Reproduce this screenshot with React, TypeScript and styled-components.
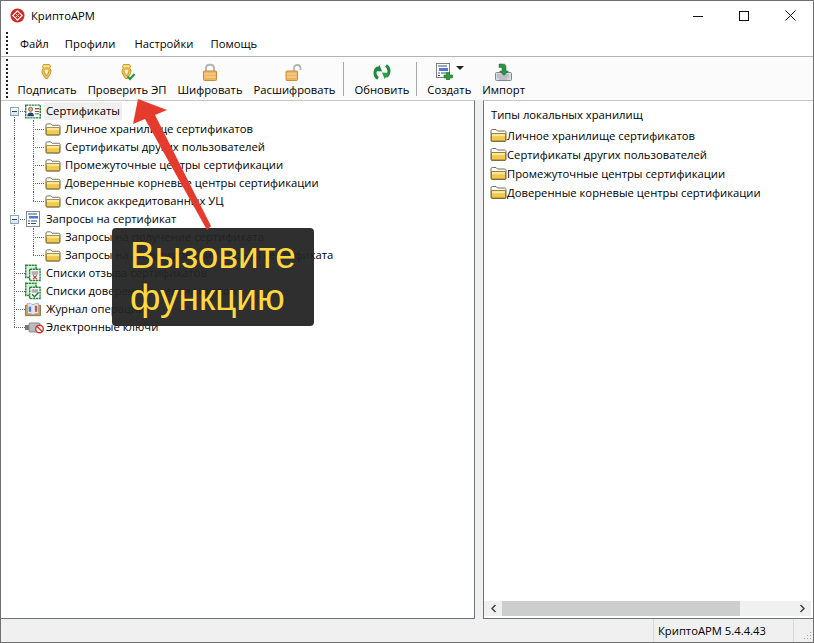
import React from 'react';
import styled, { createGlobalStyle } from 'styled-components';

const GlobalStyle = createGlobalStyle`
  html, body { margin: 0; padding: 0; background: #fff; }
  body { font-family: "Open Sans", "Noto Sans", "Liberation Sans", sans-serif; font-size: 11.25px; color: #000; }
`;

const Window = styled.div`
  position: relative;
  box-sizing: border-box;
  width: 814px;
  height: 643px;
  display: flex;
  flex-direction: column;
  overflow: hidden;
  background: #f0f0f0;
  border: 1px solid #707070;
`;

const TitleBar = styled.div`
  height: 29px;
  flex: none;
  display: flex;
  align-items: center;
  background: #fff;
  padding-left: 9px;
`;

const TitleText = styled.span`
  margin-left: 6px;
  flex: 1;
`;

const WinButton = styled.div`
  width: 46px;
  height: 29px;
  display: flex;
  align-items: center;
  justify-content: center;
`;

const MenuBar = styled.div`
  height: 26px;
  flex: none;
  display: flex;
  align-items: center;
  background: #fff;
  border-bottom: 1px solid #b4b4b4;
`;

const Grip = styled.div`
  width: 0;
  align-self: stretch;
  margin: 2px 0 2px 5px;
  border-left: 2px dotted #222;
`;

const MenuItem = styled.span`
  margin-left: ${props => props.$gap}px;
`;

const ToolBar = styled.div`
  height: 43px;
  flex: none;
  display: flex;
  background: #fbfbfb;
`;

const ToolButtons = styled.div`
  display: flex;
  padding-left: 4px;
`;

const ToolButton = styled.div`
  display: flex;
  flex-direction: column;
  align-items: center;
  padding: 5px 5.5px 0;
  white-space: nowrap;
`;

const ToolIcon = styled.div`
  height: 19px;
  margin-bottom: 1px;
  display: flex;
  align-items: center;
  justify-content: center;
`;

const ToolSeparator = styled.div`
  width: 1px;
  margin: 5px 5px 4px ${props => props.$left}px;
  background: #a8a8a8;
`;

const Panes = styled.div`
  flex: 1;
  min-height: 0;
  display: flex;
  gap: 8px;
`;

const TreePane = styled.div`
  position: relative;
  width: 474px;
  flex: none;
  box-sizing: border-box;
  padding: 1px 0 0 4px;
  background: #fff;
  border-top: 1px solid #c8c8c8;
  border-right: 1px solid #6f7479;
  border-bottom: 1px solid #6f7479;
`;

const TreeRow = styled.div`
  display: flex;
  height: 18px;
  align-items: stretch;
  white-space: nowrap;
`;

const GuideCell = styled.div`
  position: relative;
  width: 19px;
  flex: none;

  &::before {
    content: '';
    display: ${props => (props.$line === 'none' ? 'none' : 'block')};
    position: absolute;
    left: 9px;
    top: ${props => (props.$line === 'first' ? '9px' : '0')};
    bottom: ${props => (props.$line === 'last' ? '9px' : '0')};
    border-left: 1px dotted #666;
  }

  &::after {
    content: '';
    display: ${props => (props.$branch ? 'block' : 'none')};
    position: absolute;
    left: 9px;
    right: -1px;
    top: 9px;
    border-top: 1px dotted #666;
  }
`;

const Expander = styled.div`
  position: absolute;
  z-index: 1;
  left: 5px;
  top: 5px;
  width: 7px;
  height: 7px;
  border: 1px solid #8fa3bd;
  background: linear-gradient(#fff, #d8e0ea);

  &::after {
    content: '';
    position: absolute;
    left: 1px;
    right: 1px;
    top: 3px;
    height: 1px;
    background: #2c3f66;
  }
`;

const NodeIcon = styled.div`
  width: 16px;
  flex: none;
  margin-left: ${props => props.$gap}px;
  display: flex;
  align-items: center;
  justify-content: center;
`;

const NodeLabel = styled.span`
  margin-left: ${props => props.$gap}px;
  padding: 0 2px;
  line-height: 17px;
  background: ${props => (props.$selected ? '#f0f0f0' : 'transparent')};
`;

const ListPane = styled.div`
  flex: 1;
  min-width: 0;
  display: flex;
  flex-direction: column;
  background: #fff;
  border-top: 1px solid #c8c8c8;
  border-left: 1px solid #6f7479;
  border-bottom: 1px solid #6f7479;
`;

const ListBody = styled.div`
  flex: 1;
  padding: 5px 0 0 6px;
`;

const ListTitle = styled.div`
  margin: 0 0 2px 1px;
  height: 18px;
  line-height: 18px;
`;

const ListRow = styled.div`
  height: 19px;
  display: flex;
  align-items: center;
  white-space: nowrap;
`;

const ScrollBar = styled.div`
  height: 15px;
  margin: 0 2px 2px 0;
  flex: none;
  display: flex;
  align-items: center;
  background: #f0f0f0;
`;

const ScrollArrow = styled.div`
  width: 18px;
  flex: none;
  display: flex;
  justify-content: center;
`;

const ScrollTrack = styled.div`
  flex: 1;
  height: 100%;
`;

const ScrollThumb = styled.div`
  height: 100%;
  background: #cdcdcd;
`;

const StatusBar = styled.div`
  height: 23px;
  flex: none;
  display: flex;
  justify-content: flex-end;
  background: #f0f0f0;
`;

const StatusPane = styled.div`
  width: 140px;
  box-sizing: border-box;
  padding-left: 4px;
  line-height: 23px;
  border-left: 1px solid #d8d8d8;
`;

const StatusGrip = styled.div`
  width: 19px;
  display: flex;
  align-items: flex-end;
  justify-content: flex-end;
  border-left: 1px solid #d8d8d8;
`;

const Callout = styled.div`
  position: absolute;
  left: 111px;
  top: 227px;
  width: 202px;
  height: 98px;
  box-sizing: border-box;
  padding: 7px 0 0 18px;
  border-radius: 4px;
  background: rgba(36, 36, 36, 0.95);
  color: #ffd93d;
  font-family: "Liberation Sans", Arial, sans-serif;
  font-size: 37px;
  line-height: 42px;
`;

const ArrowOverlay = styled.svg`
  position: absolute;
  left: -1px;
  top: -1px;
  pointer-events: none;
`;

const Logo = () => (
  <svg width="15" height="15" viewBox="0 0 15 15">
    <circle cx="7.5" cy="7.5" r="7" fill="#d3281e" />
    <path d="M7.5 2.8 12.2 7.5 7.5 12.2 2.8 7.5Z" fill="none" stroke="#fff" strokeWidth="1.2" />
    <path d="M5.2 5.2 9.8 9.8M9.8 5.2 5.2 9.8" stroke="#f6c9c4" strokeWidth="1" />
  </svg>
);

const Nib = ({ check }: { check?: boolean }) => (
  <svg width="18" height="18" viewBox="0 0 18 18">
    <path d="M5.5 1.5h6l1 2-.8 1.5 1.3 2.5c.4 2-1.600 5-3.500 8h-2C5.500 12.500 3.500 9.500 4 7.500L5.300 5l-.8-1.500Z" fill="#f0c250" stroke="#c99a2e" />
    <path d="M6 7.500c0-2 5-2 5 0 0 1.500-1.500 3.500-2.500 5.500C7.500 11 6 9 6 7.500Z" fill="#fff2c8" stroke="#b98a24" strokeWidth=".8" />
    <rect x="5.500" y="2.500" width="6" height="1.500" fill="#fde9a8" />
    {check && <path d="M9.500 13.500 12 16l4.500-5" fill="none" stroke="#1f9a3a" strokeWidth="2" />}
  </svg>
);

const Lock = ({ open }: { open?: boolean }) => (
  <svg width="18" height="18" viewBox="0 0 18 18">
    {open ? (
      <path d="M9 9V5c0-4 6.500-4 6.500 0v2" fill="none" stroke="#b3b3b3" strokeWidth="1.800" />
    ) : (
      <path d="M5 9V5c0-4.500 8-4.500 8 0v4" fill="none" stroke="#b5b5b5" strokeWidth="2" />
    )}
    <rect x={open ? 1 : 2.500} y="8" width={open ? 11.500 : 13} height="9.500" rx="1" fill="#eeb45e" stroke="#c98b3a" />
    <path d={open ? 'M2 11h9.500M2 14h9.500' : 'M3.500 11h11M3.500 14h11'} stroke="#f8d9a4" strokeWidth="1" />
  </svg>
);

const Refresh = () => (
  <svg width="18" height="16" viewBox="0 0 18 16">
    <path d="M5 14.500C1 12 1 6 5 3.500" fill="none" stroke="#1f8a3c" strokeWidth="3" />
    <path d="M1.500 7 6.500 1 9 7.500Z" fill="#1f8a3c" />
    <path d="M13 1.500c4 2.500 4 8.500 0 11" fill="none" stroke="#1f8a3c" strokeWidth="3" />
    <path d="M16.500 9 11.500 15 9 8.500Z" fill="#2ea14c" />
  </svg>
);

const FormPlus = () => (
  <svg width="17" height="17" viewBox="0 0 17 17">
    <rect x=".5" y=".5" width="13" height="14" fill="#fff" stroke="#7b7f86" />
    <rect x="3" y="5" width="9" height="3" fill="#4f79d8" />
    <path d="M2 3h9M2 10h2M5 10h6M2 12.500h2" stroke="#38507a" strokeWidth="1" />
    <path d="M10.500 9.500h3v2.500h3v3h-3v2h-3v-2h-2.500v-3h2.500Z" fill="#2f9a3e" stroke="#1c6f2a" strokeWidth=".6" />
  </svg>
);

const DropCaret = styled.span`
  position: absolute;
  left: 20px;
  top: 3px;
  width: 0;
  height: 0;
  border-left: 4px solid transparent;
  border-right: 4px solid transparent;
  border-top: 4px solid #222;
`;

const CreateIcon = styled.div`
  position: relative;
  width: 17px;
  height: 17px;
  margin-left: -9px;
`;

const ImportIcon = () => (
  <svg width="17" height="18" viewBox="0 0 17 18">
    <rect x=".5" y="9.500" width="16" height="8" rx="1" fill="#d7dbe0" stroke="#7f8790" />
    <path d="M2.500 12h12M2.500 14h12M4.500 16h8" stroke="#667" strokeWidth=".9" strokeDasharray="1 1" />
    <path d="M4 1h4c2 0 3 1 3 3v4h2.500L9 12.500 4.500 8H7V4.500H4Z" fill="#2b9145" stroke="#1c6b30" strokeWidth=".5" />
  </svg>
);

const Folder = () => (
  <svg width="17" height="15" viewBox="0 0 17 15">
    <path d="M1 3c0-1 .5-1.500 1.500-1.500h3.500L7.500 3h7c1 0 1.500.5 1.500 1.500V12c0 .7-.5 1.500-1 1.500H2c-.7 0-1-.5-1-1.500Z" fill="#fff" stroke="#6f6a58" />
    <path d="M1.500 5.500h14V13h-14Z" fill="#f2c94e" stroke="#8f7420" strokeWidth=".9" />
    <rect x="2" y="6" width="13" height="2.200" fill="#fbe89c" />
  </svg>
);

const CertIcon = () => (
  <svg width="17" height="15" viewBox="0 0 17 15">
    <rect x=".75" y=".75" width="15.500" height="13.500" fill="#fff" stroke="#23893a" strokeWidth="1.500" strokeDasharray="2.500 .6" />
    <circle cx="6" cy="5.200" r="2.200" fill="#e9b48a" stroke="#5b3a22" strokeWidth=".7" />
    <path d="M2.500 12.500c0-3 1.500-4 3.500-4s3.500 1 3.500 4Z" fill="#2c3f70" />
    <path d="M10.500 4.500H15" stroke="#c8352b" strokeWidth="1.400" />
    <path d="M10.500 7.500H15M10.500 10H15" stroke="#555" strokeWidth="1" />
  </svg>
);

const RequestIcon = () => (
  <svg width="14" height="16" viewBox="0 0 14 16">
    <rect x=".5" y=".5" width="13" height="15" fill="#fff" stroke="#7b8aa0" />
    <rect x="3" y="5" width="9" height="2.500" fill="#4f79d8" />
    <path d="M2 3h9M2 10h2M5 10h6M2 12.500h2M5 12.500h5" stroke="#38507a" strokeWidth="1" />
  </svg>
);

const ListDoc = ({ good }: { good?: boolean }) => (
  <svg width="17" height="18" viewBox="0 0 17 18">
    <rect x=".75" y=".75" width="11" height="13" fill="#d9efdc" stroke="#23893a" strokeWidth="1.500" strokeDasharray="2.500 .6" />
    <rect x="5" y="5" width="11" height="12" fill="#fff" stroke="#23893a" strokeWidth="1.500" strokeDasharray="2.500 .6" />
    <path d="M7 8h7M7 10h7" stroke="#666" strokeWidth="1" />
    {good ? (
      <path d="M7.500 12.500l2.500 2.500L14.500 10.500" fill="none" stroke="#1c7a30" strokeWidth="1.500" />
    ) : (
      <path d="M8.500 11.500l4 4M12.500 11.500l-4 4" stroke="#c8352b" strokeWidth="1.300" />
    )}
  </svg>
);

const JournalIcon = () => (
  <svg width="17" height="15" viewBox="0 0 17 15">
    <path d="M.5 3h16v11H.5Z" fill="#d19c4e" stroke="#96703a" />
    <path d="M2.500 1c2 0 4.500 0 6 1.500C10 1 12.500 1 14.500 1v11c-2 0-4.500 0-6 1-1.500-1-4-1-6-1Z" fill="#dfe6f0" stroke="#8a95a5" strokeWidth=".7" />
    <rect x="4" y="4.500" width="2.500" height="5.500" fill="#4f79d8" />
    <rect x="10.500" y="3.500" width="2.500" height="6.500" fill="#d0574d" />
  </svg>
);

const KeyShape = styled.svg`
  margin-left: 3px;
  flex: none;
`;

const KeyIcon = () => (
  <KeyShape width="20" height="13" viewBox="0 0 20 13">
    <rect x="0" y="4" width="4" height="5" fill="#777" />
    <rect x="4" y="2" width="11" height="9" rx="1" fill="#b8bcc0" stroke="#8a8a8a" />
    <circle cx="14.500" cy="8" r="3.800" fill="#fff" stroke="#d6342a" strokeWidth="1.400" />
    <path d="M12 5.500 17 10.500" stroke="#d6342a" strokeWidth="1.400" />
  </KeyShape>
);

type Line = 'none' | 'full' | 'first' | 'last';

interface TreeNode {
  label: string;
  icon: React.ReactNode;
  root: Line;
  child?: Line;
  expander?: boolean;
  selected?: boolean;
}

const treeNodes: TreeNode[] = [
  { label: 'Сертификаты', icon: <CertIcon />, root: 'first', expander: true, selected: true },
  { label: 'Личное хранилище сертификатов', icon: <Folder />, root: 'full', child: 'full' },
  { label: 'Сертификаты других пользователей', icon: <Folder />, root: 'full', child: 'full' },
  { label: 'Промежуточные центры сертификации', icon: <Folder />, root: 'full', child: 'full' },
  { label: 'Доверенные корневые центры сертификации', icon: <Folder />, root: 'full', child: 'full' },
  { label: 'Список аккредитованных УЦ', icon: <Folder />, root: 'full', child: 'last' },
  { label: 'Запросы на сертификат', icon: <RequestIcon />, root: 'full', expander: true },
  { label: 'Запросы на получение сертификата', icon: <Folder />, root: 'full', child: 'full' },
  { label: 'Запросы на аннулирование (отзыв) сертификата', icon: <Folder />, root: 'full', child: 'last' },
  { label: 'Списки отзыва сертификатов', icon: <ListDoc />, root: 'full' },
  { label: 'Списки доверенных сертификатов', icon: <ListDoc good />, root: 'full' },
  { label: 'Журнал операций', icon: <JournalIcon />, root: 'full' },
  { label: 'Электронные ключи', icon: <KeyIcon />, root: 'last' },
];

const storeTypes = [
  'Личное хранилище сертификатов',
  'Сертификаты других пользователей',
  'Промежуточные центры сертификации',
  'Доверенные корневые центры сертификации',
];

const menuItems = [
  { label: 'Файл', gap: 12 },
  { label: 'Профили', gap: 16 },
  { label: 'Настройки', gap: 19 },
  { label: 'Помощь', gap: 17 },
];

const App: React.FC = () => (
  <Window>
    <GlobalStyle />
    <TitleBar>
      <Logo />
      <TitleText>КриптоАРМ</TitleText>
      <WinButton>
        <svg width="10" height="10" viewBox="0 0 10 10"><path d="M0 5.500h10" stroke="#111" /></svg>
      </WinButton>
      <WinButton>
        <svg width="10" height="10" viewBox="0 0 10 10"><rect x=".5" y=".5" width="9" height="9" fill="none" stroke="#111" /></svg>
      </WinButton>
      <WinButton>
        <svg width="11" height="11" viewBox="0 0 11 11"><path d="M.5.500l10 10M10.500.500l-10 10" stroke="#111" /></svg>
      </WinButton>
    </TitleBar>

    <MenuBar>
      <Grip />
      {menuItems.map(item => (
        <MenuItem key={item.label} $gap={item.gap}>{item.label}</MenuItem>
      ))}
    </MenuBar>

    <ToolBar>
      <Grip />
      <ToolButtons>
        <ToolButton><ToolIcon><Nib /></ToolIcon>Подписать</ToolButton>
        <ToolButton><ToolIcon><Nib check /></ToolIcon>Проверить ЭП</ToolButton>
        <ToolButton><ToolIcon><Lock /></ToolIcon>Шифровать</ToolButton>
        <ToolButton><ToolIcon><Lock open /></ToolIcon>Расшифровать</ToolButton>
        <ToolSeparator $left={2} />
        <ToolButton><ToolIcon><Refresh /></ToolIcon>Обновить</ToolButton>
        <ToolSeparator $left={1} />
        <ToolButton>
          <ToolIcon><CreateIcon><FormPlus /><DropCaret /></CreateIcon></ToolIcon>
          Создать
        </ToolButton>
        <ToolButton><ToolIcon><ImportIcon /></ToolIcon>Импорт</ToolButton>
      </ToolButtons>
    </ToolBar>

    <Panes>
      <TreePane>
        {treeNodes.map(node => (
          <TreeRow key={node.label}>
            <GuideCell $line={node.root} $branch={!node.child}>
              {node.expander && <Expander />}
            </GuideCell>
            {node.child && <GuideCell $line={node.child} $branch />}
            <NodeIcon $gap={node.child ? 2 : 1}>{node.icon}</NodeIcon>
            <NodeLabel $gap={node.child ? 2 : 3} $selected={node.selected}>{node.label}</NodeLabel>
          </TreeRow>
        ))}
      </TreePane>

      <ListPane>
        <ListBody>
          <ListTitle>Типы локальных хранилищ</ListTitle>
          {storeTypes.map(label => (
            <ListRow key={label}>
              <Folder />
              <span>{label}</span>
            </ListRow>
          ))}
        </ListBody>
        <ScrollBar>
          <ScrollArrow>
            <svg width="7" height="9" viewBox="0 0 7 9"><path d="M5.500 1 2 4.500 5.500 8" fill="none" stroke="#444" strokeWidth="1.500" /></svg>
          </ScrollArrow>
          <ScrollTrack>
            <ScrollThumb style={{ width: 238 }} />
          </ScrollTrack>
          <ScrollArrow>
            <svg width="7" height="9" viewBox="0 0 7 9"><path d="M1.500 1 5 4.500 1.500 8" fill="none" stroke="#444" strokeWidth="1.500" /></svg>
          </ScrollArrow>
        </ScrollBar>
      </ListPane>
    </Panes>

    <StatusBar>
      <StatusPane>КриптоАРМ 5.4.4.43</StatusPane>
      <StatusGrip>
        <svg width="12" height="12" viewBox="0 0 12 12">
          <path d="M9 2h1v1H9zM6 5h1v1H6zM9 5h1v1H9zM3 8h1v1H3zM6 8h1v1H6zM9 8h1v1H9z" fill="#a8a8a8" />
        </svg>
      </StatusGrip>
    </StatusBar>

    <Callout>Вызовите<br />функцию</Callout>
    <ArrowOverlay width="814" height="643" viewBox="0 0 814 643">
      <path d="M138 99 167 110 155 115 211 226 207 230 145 119 133 124Z" fill="#e53b2c" />
    </ArrowOverlay>
  </Window>
);

export default App;
